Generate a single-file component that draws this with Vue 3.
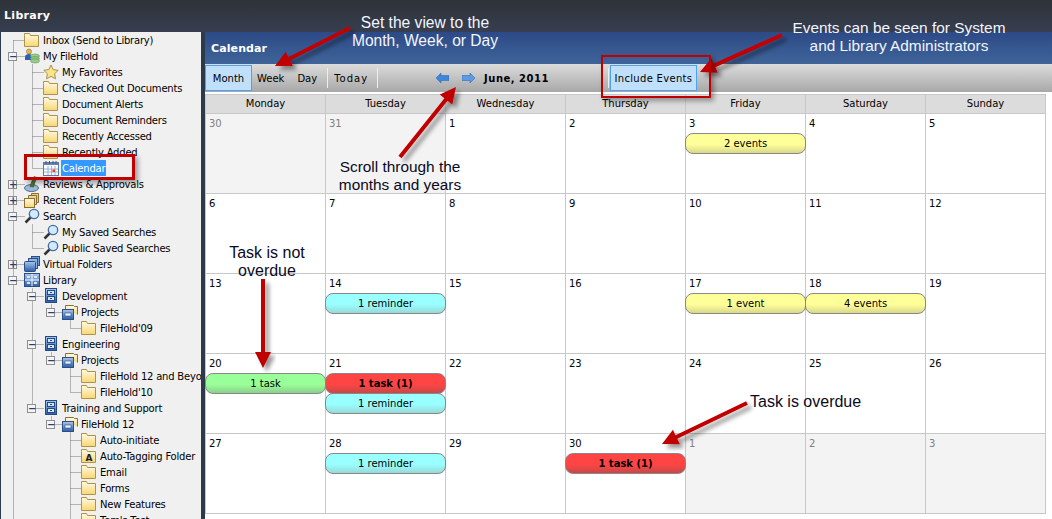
<template>
	<div class="app">
		<div class="topbar">Library</div>
		<div class="body">
			<aside class="tree">
				<!-- dotted connector lines and shared gradients -->
				<svg class="tree__lines" width="201" height="487">
					<defs>
						<linearGradient id="fold" x1="0" y1="0" x2="0" y2="1">
							<stop offset="0" stop-color="#fffbe6" />
							<stop offset="1" stop-color="#f8d670" />
						</linearGradient>
						<linearGradient id="blue" x1="0" y1="0" x2="0" y2="1">
							<stop offset="0" stop-color="#a9c8ec" />
							<stop offset="1" stop-color="#2d5ea8" />
						</linearGradient>
					</defs>
					<line
						v-for="(l, i) in lines"
						:key="i"
						:x1="l[0] + 0.5"
						:y1="l[1] - 32 + 0.5"
						:x2="l[2] + 0.5"
						:y2="l[3] - 32 + 0.5"
						stroke="#777"
						stroke-dasharray="1 1"
					/>
				</svg>
				<div
					v-for="(row, i) in rows"
					:key="i"
					class="tree__row"
					:style="{ paddingLeft: 8 + row.level * 19 + 'px' }"
				>
					<span class="tree__exp" :class="{ 'tree__exp--none': !row.exp }">
						<template v-if="row.exp">{{ row.exp }}</template>
					</span>
					<svg class="tree__icon" width="16" height="16" viewBox="0 0 16 16">
						<g v-if="row.icon === 'folder' || row.icon === 'tag'">
							<path d="M.5 3.500V1.500h5l1 2h8v11H.5z" fill="url(#fold)" stroke="#b2924a" />
							<text v-if="row.icon === 'tag'" x="8" y="13" class="tree__tag">A</text>
						</g>
						<g v-else-if="row.icon === 'star'">
							<path d="M8 1l2.200 4.600 5 .7-3.600 3.500.9 5L8 12.400l-4.500 2.400.9-5L.8 6.300l5-.7z" fill="#fbe38a" stroke="#a8904e" />
						</g>
						<g v-else-if="row.icon === 'user'">
							<circle cx="5" cy="3.500" r="2.500" fill="#e8b850" stroke="#8a6a20" stroke-width=".6" />
							<path d="M1 12V8.500C1 7 3 6 5 6s3 1 3 2.500V12z" fill="#2f5fae" />
							<ellipse cx="11" cy="8" rx="4.500" ry="2" fill="#9cc98c" stroke="#5f9a5a" stroke-width=".6" />
							<ellipse cx="11" cy="10.500" rx="4.500" ry="2" fill="#8fc080" stroke="#5f9a5a" stroke-width=".6" />
							<ellipse cx="11" cy="13" rx="4.500" ry="2" fill="#9cc98c" stroke="#5f9a5a" stroke-width=".6" />
						</g>
						<g v-else-if="row.icon === 'calendar'">
							<rect x=".5" y="2.500" width="15" height="13" fill="#fff" stroke="#5a7aaa" />
							<rect x="1" y="3" width="14" height="2" fill="#5f84bc" />
							<path d="M5 6v9M8.500 6v9M12 6v9M1 9h14M1 12h14" stroke="#9ab2d6" />
							<rect x="9.500" y="9.500" width="2.500" height="2.500" fill="#e8401c" />
							<path d="M3 1v3M6.500 1v3M10 1v3M13 1v3" stroke="#556" />
						</g>
						<g v-else-if="row.icon === 'review'">
							<ellipse cx="7.500" cy="12" rx="7" ry="3.500" fill="#9db8d8" stroke="#4e6d94" />
							<path d="M6 10.500l2-5.500 2-4.500 3 1-2 4.500-1.500 5z" fill="#4c7a3c" stroke="#2f4f28" stroke-width=".6" />
						</g>
						<g v-else-if="row.icon === 'recent'">
							<path d="M7.500 3.500v-2h7v9h-2" fill="#e8cc80" stroke="#8a7038" />
							<path d="M4.500 6.500v-3h8v9h-2" fill="#efd68c" stroke="#8a7038" />
							<rect x=".5" y="6.500" width="10" height="9" fill="url(#fold)" stroke="#8a7038" />
						</g>
						<g v-else-if="row.icon === 'search'">
							<path d="M6.500 9.500L1.500 14.500" stroke="#333" stroke-width="2.500" />
							<circle cx="10" cy="6" r="4.700" fill="#d4e8fa" stroke="#3f6ea8" stroke-width="1.300" />
						</g>
						<g v-else-if="row.icon === 'virtual'">
							<rect x="7.500" y=".5" width="8" height="9" fill="#6d9ad0" stroke="#2a4f86" />
							<rect x="4.500" y="2.500" width="9" height="10" fill="#8fb4e0" stroke="#2a4f86" />
							<rect x=".5" y="5.500" width="11" height="10" rx="1" fill="url(#blue)" stroke="#2a4f86" />
						</g>
						<g v-else-if="row.icon === 'library'">
							<rect x=".5" y="1.500" width="15" height="13" fill="url(#blue)" stroke="#2a4f86" />
							<path d="M8 2v12M1 8h14" stroke="#fff" />
							<rect x="3" y="4" width="3" height="2" fill="#d8e8fa" />
							<rect x="10" y="4" width="3" height="2" fill="#d8e8fa" />
							<rect x="3" y="10" width="3" height="2" fill="#d8e8fa" />
							<rect x="10" y="10" width="3" height="2" fill="#d8e8fa" />
						</g>
						<g v-else-if="row.icon === 'cabinet'">
							<rect x="2.500" y=".5" width="11" height="14" fill="url(#blue)" stroke="#234a84" />
							<rect x="4.500" y="2.500" width="7" height="4" fill="#d4e4f8" stroke="#234a84" />
							<rect x="4.500" y="8.500" width="7" height="4" fill="#d4e4f8" stroke="#234a84" />
							<path d="M7 4.500h2M7 10.500h2" stroke="#234a84" />
						</g>
						<g v-else-if="row.icon === 'drawer'">
							<path d="M3.500 5.500V1.500h8l1 1h3v8" fill="url(#fold)" stroke="#8a7038" />
							<rect x=".5" y="5.500" width="11" height="10" fill="url(#blue)" stroke="#2a4f86" />
							<rect x="3" y="9" width="6" height="3" fill="#eaf2fc" stroke="#2a4f86" stroke-width=".6" />
						</g>
					</svg>
					<span class="tree__label" :class="{ 'tree__label--active': row.active }">{{ row.label }}</span>
				</div>
			</aside>

			<main class="main">
				<div class="main__head">Calendar</div>
				<div class="toolbar">
					<button class="toolbar__btn toolbar__btn--on toolbar__btn--month">Month</button>
					<span class="toolbar__item toolbar__item--week">Week</span>
					<span class="toolbar__item toolbar__item--day">Day</span>
					<span class="toolbar__sep toolbar__sep--first"></span>
					<span class="toolbar__item toolbar__item--today">Today</span>
					<span class="toolbar__sep toolbar__sep--second"></span>
					<svg class="toolbar__arrow toolbar__arrow--prev" width="13" height="10" viewBox="0 0 13 10">
						<path d="M0 5l5-5v2.500h8v5H5V10z" fill="#3d86dc" stroke="#2a5ea8" stroke-width=".5" />
					</svg>
					<svg class="toolbar__arrow toolbar__arrow--next" width="13" height="10" viewBox="0 0 13 10">
						<path d="M13 5L8 0v2.500H0v5h8V10z" fill="#5d9ae4" stroke="#2a5ea8" stroke-width=".5" />
					</svg>
					<span class="toolbar__date">June, 2011</span>
					<span class="toolbar__sep toolbar__sep--third"></span>
					<button class="toolbar__btn toolbar__btn--on toolbar__btn--events">Include Events</button>
				</div>
				<div class="grid">
					<div v-for="d in days" :key="d" class="grid__day">{{ d }}</div>
					<div
						v-for="(c, i) in cells"
						:key="i"
						class="grid__cell"
						:class="{ 'grid__cell--muted': c.muted }"
					>
						<div class="grid__num">{{ c.n }}</div>
						<div
							v-for="(p, j) in c.pills"
							:key="j"
							class="pill"
							:class="'pill--' + p[0]"
						>{{ p[1] }}</div>
					</div>
				</div>
			</main>
		</div>

		<!-- callouts drawn on top of the screenshot -->
		<svg class="callouts" width="1052" height="519">
			<defs>
				<filter id="shade" x="-30%" y="-30%" width="160%" height="160%">
					<feDropShadow dx="4" dy="4" stdDeviation="2" flood-color="#000" flood-opacity=".4" />
				</filter>
			</defs>
			<polygon v-for="(a, i) in arrows" :key="i" :points="a" fill="#c00000" filter="url(#shade)" />
		</svg>
		<div class="box box--calendar"></div>
		<div class="box box--events"></div>
		<div class="note note--light note--view">Set the view to the<br />Month, Week, or Day</div>
		<div class="note note--light note--events">Events can be seen for System<br />and Library Administrators</div>
		<div class="note note--scroll">Scroll through the<br />months and years</div>
		<div class="note note--notdue">Task is not<br />overdue</div>
		<div class="note note--overdue">Task is overdue</div>
	</div>
</template>

<script setup>
const row = (level, label, icon, exp, active) => ({ level, label, icon, exp, active });

const rows = [
	row(0, 'Inbox (Send to Library)', 'folder'),
	row(0, 'My FileHold', 'user', '−'),
	row(1, 'My Favorites', 'star'),
	row(1, 'Checked Out Documents', 'folder'),
	row(1, 'Document Alerts', 'folder'),
	row(1, 'Document Reminders', 'folder'),
	row(1, 'Recently Accessed', 'folder'),
	row(1, 'Recently Added', 'folder'),
	row(1, 'Calendar', 'calendar', null, true),
	row(0, 'Reviews & Approvals', 'review', '+'),
	row(0, 'Recent Folders', 'recent', '+'),
	row(0, 'Search', 'search', '−'),
	row(1, 'My Saved Searches', 'search'),
	row(1, 'Public Saved Searches', 'search'),
	row(0, 'Virtual Folders', 'virtual', '+'),
	row(0, 'Library', 'library', '−'),
	row(1, 'Development', 'cabinet', '−'),
	row(2, 'Projects', 'drawer', '−'),
	row(3, "FileHold'09", 'folder'),
	row(1, 'Engineering', 'cabinet', '−'),
	row(2, 'Projects', 'drawer', '−'),
	row(3, 'FileHold 12 and Beyond', 'folder'),
	row(3, "FileHold'10", 'folder'),
	row(1, 'Training and Support', 'cabinet', '−'),
	row(2, 'FileHold 12', 'drawer', '−'),
	row(3, 'Auto-initiate', 'folder'),
	row(3, 'Auto-Tagging Folder', 'tag'),
	row(3, 'Email', 'folder'),
	row(3, 'Forms', 'folder'),
	row(3, 'New Features', 'folder'),
	row(3, "Tom's Test", 'folder'),
];

// Vertical runs of the tree, then a stub from each run to its icon
const lines = [
	[12, 40, 12, 519],
	[31, 64, 31, 168],
	[31, 224, 31, 248],
	[31, 288, 31, 408],
	[50, 304, 50, 312],
	[50, 352, 50, 360],
	[50, 416, 50, 424],
	[69, 320, 69, 328],
	[69, 368, 69, 392],
	[69, 432, 69, 519],
];
rows.forEach((r, i) => {
	const y = 40 + i * 16;
	const x = 12 + r.level * 19;
	lines.push([x, y, x + 12, y]);
});

const days = ['Monday', 'Tuesday', 'Wednesday', 'Thursday', 'Friday', 'Saturday', 'Sunday'];

const pills = {
	3: [['yellow', '2 events']],
	14: [['cyan', '1 reminder']],
	17: [['yellow', '1 event']],
	18: [['yellow', '4 events']],
	20: [['green', '1 task']],
	21: [['red', '1 task (1)'], ['cyan', '1 reminder']],
	28: [['cyan', '1 reminder']],
	30: [['red', '1 task (1)']],
};

const cells = [
	{ n: 30, muted: true },
	{ n: 31, muted: true },
];
for (let n = 1; n <= 30; n++) cells.push({ n, pills: pills[n] || [] });
for (let n = 1; n <= 3; n++) cells.push({ n, muted: true });

// Turn a start and tip into an arrow polygon
const arrow = (x1, y1, x2, y2) => {
	const len = Math.hypot(x2 - x1, y2 - y1);
	const ux = (x2 - x1) / len;
	const uy = (y2 - y1) / len;
	const at = (along, side) => `${x2 - ux * along - uy * side},${y2 - uy * along + ux * side}`;
	return [
		at(len, 2), at(16, 2), at(16, 8), at(0, 0), at(16, -8), at(16, -2), at(len, -2),
	].join(' ');
};

const arrows = [
	arrow(350, 28, 275, 66),
	arrow(400, 157, 456, 87),
	arrow(782, 35, 700, 72),
	arrow(263, 279, 263, 368),
	arrow(747, 403, 662, 444),
];
</script>

<style>
html,
body {
	margin: 0;
	background: #fff;
}
</style>

<style scoped>
.app {
	position: relative;
	width: 1052px;
	height: 519px;
	overflow: hidden;
	display: flex;
	flex-direction: column;
	font-family: "DejaVu Sans", sans-serif;
	font-size: 10px;
	color: #000;
	background: #fff;
}

.topbar {
	height: 32px;
	flex: none;
	box-sizing: border-box;
	padding-left: 4px;
	line-height: 32px;
	font-weight: bold;
	font-size: 11px;
	letter-spacing: 0.3px;
	color: #fff;
	background: linear-gradient(#2e3238, #363e50);
}

.body {
	flex: 1;
	display: flex;
	min-height: 0;
}

.tree {
	position: relative;
	width: 200px;
	flex: none;
	overflow: hidden;
	border-left: 1px solid #2c3a4a;
	background: #f0f0f0;
	letter-spacing: -0.2px;
}

.tree__lines {
	position: absolute;
	left: 0;
	top: 0;
}

.tree__row {
	position: relative;
	height: 16px;
	display: flex;
	align-items: center;
	white-space: nowrap;
	margin-left: -1px;
}

.tree__exp {
	width: 9px;
	height: 9px;
	flex: none;
	margin-right: 7px;
	border: 1px solid #8f8f8f;
	box-sizing: border-box;
	background: #f4f4f4;
	color: #24407c;
	font: bold 10px/7px "DejaVu Sans", sans-serif;
	text-align: center;
}

.tree__exp--none {
	visibility: hidden;
}

.tree__icon {
	flex: none;
	margin-right: 2px;
}

.tree__tag {
	font: bold 9px "DejaVu Sans", sans-serif;
	text-anchor: middle;
	fill: #222;
}

.tree__label {
	display: block;
	height: 16px;
	overflow: hidden;
	padding: 0 1px;
	line-height: 18px;
}

.tree__label--active {
	background: #3399ff;
	color: #fff;
}

.main {
	flex: 1;
	min-width: 0;
	border-left: 4px solid #2c3a4a;
}

.main__head {
	height: 32px;
	box-sizing: border-box;
	padding-left: 6px;
	line-height: 33px;
	font-weight: bold;
	font-size: 11px;
	letter-spacing: 0.1px;
	color: #fff;
	background: linear-gradient(#2c4a86, #40649a);
}

.toolbar {
	height: 28px;
	display: flex;
	align-items: center;
	box-sizing: border-box;
	white-space: nowrap;
	background: linear-gradient(#dcdcdc, #a8a8a8);
}

.toolbar__btn {
	height: 26px;
	padding: 0;
	border: 1px solid #4da3f0;
	background: #c0dffb;
	font: inherit;
	color: #000;
}

.toolbar__btn--month {
	width: 47px;
}

.toolbar__btn--events {
	width: 87px;
	margin-left: 1px;
	letter-spacing: 0.3px;
}

.toolbar__item--week {
	margin-left: 5px;
}

.toolbar__item--day {
	margin-left: 13px;
}

.toolbar__sep {
	width: 1px;
	height: 20px;
	background: #eee;
}

.toolbar__sep--first {
	margin-left: 10px;
}

.toolbar__item--today {
	margin-left: 6px;
	letter-spacing: 1px;
}

.toolbar__sep--second {
	margin-left: 9px;
}

.toolbar__arrow--prev {
	margin-left: 58px;
}

.toolbar__arrow--next {
	margin-left: 13px;
}

.toolbar__date {
	margin-left: 9px;
	font-weight: bold;
	letter-spacing: 0.5px;
}

.toolbar__sep--third {
	margin-left: 59px;
}

.grid {
	display: grid;
	grid-template-columns: repeat(7, 120px);
	grid-template-rows: 19px repeat(5, 80px);
	width: 841px;
	margin-top: 2px;
	border-right: 1px solid #c8c8c8;
	border-bottom: 1px solid #c8c8c8;
	box-sizing: border-box;
}

.grid__day {
	box-sizing: border-box;
	border-left: 1px solid #c8c8c8;
	border-top: 1px solid #c8c8c8;
	background: #dcdcdc;
	text-align: center;
	line-height: 18px;
}

.grid__cell {
	box-sizing: border-box;
	border-left: 1px solid #c8c8c8;
	border-top: 1px solid #c8c8c8;
	background: #fff;
}

.grid__cell--muted {
	background: #f3f3f3;
	color: #808080;
}

.grid__num {
	padding: 2px 0 0 3px;
	height: 16px;
	line-height: 16px;
	margin-bottom: 1px;
}

.pill {
	position: relative;
	z-index: 1;
	box-sizing: border-box;
	width: 121px;
	height: 21px;
	margin: 0 0 -1px -1px;
	border: 1px solid #888;
	border-radius: 8px;
	text-align: center;
	line-height: 20px;
}

.pill--yellow {
	background: linear-gradient(#ffff99 55%, #d8d88c);
}

.pill--cyan {
	background: linear-gradient(#99ffff 55%, #98d8d8);
}

.pill--green {
	background: linear-gradient(#99ff99 55%, #8cd08c);
}

.pill--red {
	font-weight: bold;
	background: linear-gradient(#ff4444 55%, #c84848);
}

.callouts {
	position: absolute;
	left: 0;
	top: 0;
	pointer-events: none;
}

.box {
	position: absolute;
	box-sizing: border-box;
	border: 3px solid #c00000;
	box-shadow: 3px 3px 5px rgba(0, 0, 0, 0.35);
}

.box--calendar {
	left: 24px;
	top: 154px;
	width: 111px;
	height: 26px;
}

.box--events {
	left: 601px;
	top: 55px;
	width: 110px;
	height: 43px;
	border-width: 2px;
}

.note {
	position: absolute;
	width: 300px;
	text-align: center;
	font-family: "Liberation Sans", Arial, sans-serif;
	font-size: 15.4px;
	line-height: 18px;
	color: #0a0a24;
}

.note--light {
	color: #f2f5ff;
}

.note--view {
	left: 275px;
	top: 14px;
	font-size: 15.6px;
}

.note--events {
	left: 749px;
	top: 19px;
}

.note--scroll {
	left: 250px;
	top: 158px;
}

.note--notdue {
	left: 117px;
	top: 244px;
	font-size: 16px;
}

.note--overdue {
	left: 750px;
	top: 393px;
	width: auto;
	font-size: 16px;
}
</style>
